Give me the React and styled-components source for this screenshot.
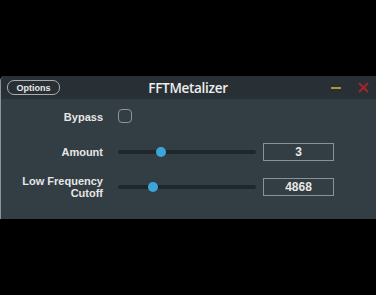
import styled, { createGlobalStyle } from "styled-components";

const Global = createGlobalStyle`
  html, body { margin: 0; padding: 0; background: #000; }
  body { height: 295px; overflow: hidden; font-family: "Liberation Sans", Arial, sans-serif; }
`;

const Page = styled.div`
  padding-top: 76px;
`;

const Window = styled.div`
  width: 376px;
  height: 143px;
  box-sizing: border-box;
  background: #333d44;
  border-left: 1px solid #8d9396;
  border-top-left-radius: 5px;
  overflow: hidden;
  display: flex;
  flex-direction: column;
`;

const TitleBar = styled.div`
  height: 23px;
  background: #283035;
  display: grid;
  grid-template-columns: 1fr auto 1fr;
  align-items: center;
  padding: 0 7px 0 6px;
`;

const OptionsBtn = styled.button`
  justify-self: start;
  width: 53px;
  height: 15px;
  padding: 0;
  border: 1px solid #a9adb0;
  border-radius: 7px;
  background: transparent;
  color: #e8e8e8;
  font: bold 9px "Liberation Sans", Arial, sans-serif;
`;

const Title = styled.div`
  color: #eeeeee;
  font: 600 13.5px "Open Sans", "Liberation Sans", sans-serif;
  letter-spacing: -0.3px;
`;

const WinButtons = styled.div`
  justify-self: end;
  display: flex;
  align-items: center;
  gap: 17px;
`;

const Minimize = styled.span`
  display: block;
  width: 10px;
  height: 2px;
  background: #b0962c;
`;

const Body = styled.div`
  display: grid;
  grid-template-columns: 102px 153px 78px;
  grid-auto-rows: 35px;
  align-items: center;
`;

const Label = styled.div`
  text-align: right;
  color: #e6e6e6;
  font: bold 11px/12px "Liberation Sans", Arial, sans-serif;
`;

const Control = styled.div`
  padding-left: 15px;
  display: flex;
  align-items: center;
`;

const Checkbox = styled.span`
  display: block;
  width: 12px;
  height: 12px;
  margin-top: -1px;
  border: 1.5px solid #8e9396;
  border-radius: 4px;
`;

const Track = styled.div`
  position: relative;
  flex: none;
  width: 138px;
  height: 4px;
  border-radius: 2px;
  background: #1f272b;
`;

const Thumb = styled.span`
  position: absolute;
  top: 50%;
  width: 10px;
  height: 10px;
  margin: -5px 0 0 -5px;
  border-radius: 50%;
  background: #3aa6da;
`;

const ValueBox = styled.div`
  margin-left: 7px;
  width: 71px;
  height: 18px;
  box-sizing: border-box;
  border: 1px solid #8c9195;
  display: flex;
  align-items: center;
  justify-content: center;
  color: #e8e8e8;
  font: bold 12px "Liberation Sans", Arial, sans-serif;
`;

const Empty = styled.div``;

function Slider({ value }) {
  return (
    <Track>
      <Thumb style={{ left: `${value * 100}%` }} />
    </Track>
  );
}

export default function App() {
  return (
    <>
      <Global />
      <Page>
        <Window>
          <TitleBar>
            <OptionsBtn>Options</OptionsBtn>
            <Title>FFTMetalizer</Title>
            <WinButtons>
              <Minimize />
              <svg width="11" height="11" viewBox="0 0 11 11">
                <path d="M1 1L10 10M10 1L1 10" stroke="#a3262b" strokeWidth="2" />
              </svg>
            </WinButtons>
          </TitleBar>
          <Body>
            <Label>Bypass</Label>
            <Control>
              <Checkbox />
            </Control>
            <Empty />

            <Label>Amount</Label>
            <Control>
              <Slider value={0.31} />
            </Control>
            <ValueBox>3</ValueBox>

            <Label>
              Low Frequency
              <br />
              Cutoff
            </Label>
            <Control>
              <Slider value={0.255} />
            </Control>
            <ValueBox>4868</ValueBox>
          </Body>
        </Window>
      </Page>
    </>
  );
}
